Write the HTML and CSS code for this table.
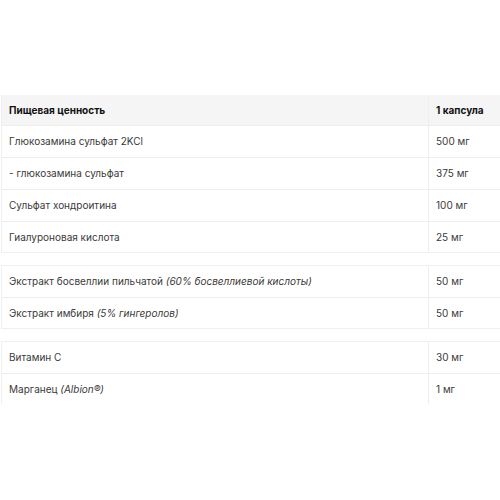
FILE: index.html
```html
<!DOCTYPE html>
<html>
<head>
<meta charset="utf-8">
<link rel="stylesheet" href="styles.css">
</head>
<body>
<div class="wrap">
  <div class="group head-group">
    <div class="row head"><div class="c1">Пищевая ценность</div><div class="c2">1 капсула</div></div>
    <div class="row"><div class="c1">Глюкозамина сульфат 2KCl</div><div class="c2">500 мг</div></div>
    <div class="row"><div class="c1">- глюкозамина сульфат</div><div class="c2">375 мг</div></div>
    <div class="row"><div class="c1">Сульфат хондроитина</div><div class="c2">100 мг</div></div>
    <div class="row"><div class="c1">Гиалуроновая кислота</div><div class="c2">25 мг</div></div>
  </div>
  <div class="group">
    <div class="row"><div class="c1">Экстракт босвеллии пильчатой <i>(60% босвеллиевой кислоты)</i></div><div class="c2">50 мг</div></div>
    <div class="row"><div class="c1">Экстракт имбиря <i>(5% гингеролов)</i></div><div class="c2">50 мг</div></div>
  </div>
  <div class="group last">
    <div class="row"><div class="c1">Витамин C</div><div class="c2">30 мг</div></div>
    <div class="row"><div class="c1">Марганец <i>(Albion®)</i></div><div class="c2">1 мг</div></div>
  </div>
</div>
</body>
</html>
```
FILE: styles.css
```css
html, body { margin: 0; padding: 0; background: #fff; }
body { font-family: Inter, "Noto Sans", sans-serif; font-size: 10px; color: #3a3a3a; }
.wrap { padding: 95px 0 0 1px; display: flex; flex-direction: column; gap: 12px; }
.group { border-left: 1px solid #f0f0f0; border-top: 1px solid #f0f0f0; }
.group:not(.last) { border-bottom: 1px solid #f0f0f0; }
.row { display: grid; grid-template-columns: 426px 1fr; height: 31px; border-bottom: 1px solid #eeeeee; }
.row:last-child { border-bottom: none; height: 30px; }
.head-group { border-top: none; }
.row.head { background: #f5f5f5; height: 30px; font-weight: 700; color: #111; }
.c1, .c2 { display: flex; align-items: center; padding: 0 0 1px 7px; white-space: pre; }
.c2 { border-left: 1px solid #eeeeee; }
i { font-style: italic; }
```
